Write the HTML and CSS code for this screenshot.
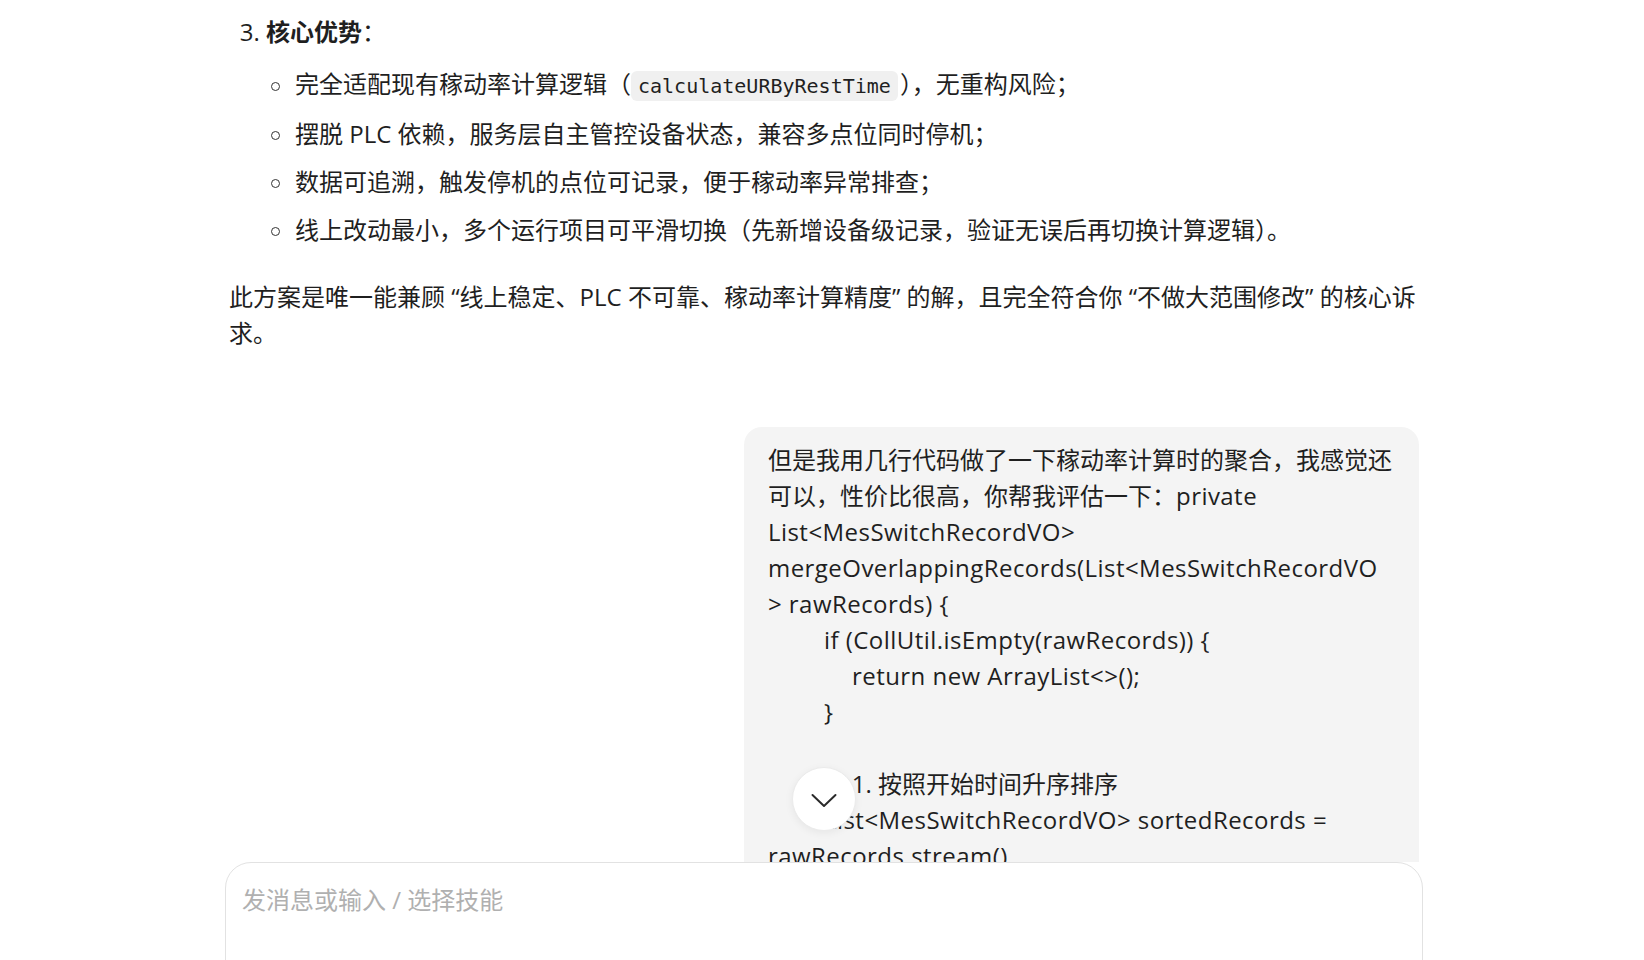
FILE: index.html
```html
<!DOCTYPE html>
<html lang="zh-CN">
<head>
<meta charset="utf-8">
<title>对话</title>
<link rel="stylesheet" href="styles.css">
</head>
<body>
<div class="app">
  <div class="scroll">
    <ol class="steps" start="3">
      <li><strong>核心优势</strong>：
        <ul class="bullets">
          <li><span>完全适配现有稼动率计算逻辑（<code>calculateURByRestTime</code>），无重构风险；</span></li>
          <li><span>摆脱 PLC 依赖，服务层自主管控设备状态，兼容多点位同时停机；</span></li>
          <li><span>数据可追溯，触发停机的点位可记录，便于稼动率异常排查；</span></li>
          <li><span>线上改动最小，多个运行项目可平滑切换（先新增设备级记录，验证无误后再切换计算逻辑）。</span></li>
        </ul>
      </li>
    </ol>
    <p class="summary">此方案是唯一能兼顾 “线上稳定、PLC 不可靠、稼动率计算精度” 的解，且完全符合你 “不做大范围修改” 的核心诉求。</p>
    <div class="user-row">
      <div class="bubble">
        <div class="ln">但是我用几行代码做了一下稼动率计算时的聚合，我感觉还</div>
        <div class="ln">可以，性价比很高，你帮我评估一下：<span class="lat">private</span></div>
        <div class="ln lat">List&lt;MesSwitchRecordVO&gt;</div>
        <div class="ln lat">mergeOverlappingRecords(List&lt;MesSwitchRecordVO</div>
        <div class="ln lat">&gt; rawRecords) {</div>
        <div class="ln lat in1">if (CollUtil.isEmpty(rawRecords)) {</div>
        <div class="ln lat in2">return new ArrayList&lt;&gt;();</div>
        <div class="ln lat in1">}</div>
        <div class="ln blank"></div>
        <div class="ln in1c">// 1. 按照开始时间升序排序</div>
        <div class="ln lat in1">List&lt;MesSwitchRecordVO&gt; sortedRecords =</div>
        <div class="ln lat">rawRecords.stream()</div>
      </div>
    </div>
    <button class="to-bottom" type="button" aria-label="回到底部">
      <svg width="26" height="15" viewBox="0 0 26 15" fill="none"><path d="M1.5 2 L13 13 L24.5 2" stroke="#2a2a2a" stroke-width="2" stroke-linecap="round" stroke-linejoin="round"/></svg>
    </button>
  </div>
  <div class="composer">
    <div class="placeholder">发消息或输入 / 选择技能</div>
  </div>
</div>
</body>
</html>
```

FILE: styles.css
```css
html, body {
  margin: 0;
  padding: 0;
  background: #ffffff;
}

body {
  font-family: "Open Sans", "Noto Sans CJK SC", sans-serif;
  font-size: 24px;
  line-height: 36px;
  color: #1f1f1f;
}

.app {
  height: 960px;
  overflow: hidden;
  display: flex;
  flex-direction: column;
  padding-left: 4px;
}

.scroll {
  flex: none;
  width: 1190px;
  height: 862px;
  margin: 0 auto;
  overflow: hidden;
  position: relative;
  padding-top: 14px;
  box-sizing: border-box;
}

.steps {
  margin: 0;
  padding-left: 37px;
}

.steps strong {
  font-weight: 700;
}

.bullets {
  list-style: none;
  margin: 16px 0 0 -2px;
  padding-left: 7px;
}

.bullets li {
  display: flex;
  align-items: center;
  margin-top: 12px;
  white-space: nowrap;
}

.bullets li:first-child {
  margin-top: 0;
}

.bullets li::before {
  content: "";
  flex: none;
  width: 9px;
  height: 9px;
  box-sizing: border-box;
  border: 1.5px solid #333333;
  border-radius: 50%;
  margin: 3px 15px 0 0;
}

code {
  font-family: "DejaVu Sans Mono", monospace;
  font-size: 20px;
  background: #f0f0f0;
  border-radius: 6px;
  padding: 3px 7px 3px 7px;
  margin: 0 2px 0 0;
  color: #1f1f1f;
}

.summary {
  margin: 31px 0 0;
}

.user-row {
  display: flex;
  justify-content: flex-end;
  margin-top: 76px;
}

.bubble {
  width: 675px;
  box-sizing: border-box;
  padding: 15px 24px 24px;
  background: #f4f4f4;
  border-radius: 18px;
}

.ln {
  white-space: nowrap;
  height: 36px;
}

.lat {
  letter-spacing: 0.45px;
}

.in1 { padding-left: 56px; }
.in2 { padding-left: 84px; }
.in1c { padding-left: 60px; }

.to-bottom {
  position: absolute;
  left: calc(50% - 32px);
  bottom: 31px;
  width: 64px;
  height: 64px;
  border-radius: 50%;
  border: 1px solid #ebebeb;
  background: #ffffff;
  box-shadow: 0 2px 8px rgba(0, 0, 0, 0.06);
  display: flex;
  align-items: center;
  justify-content: center;
  padding: 3px 0 0;
  cursor: pointer;
}

.composer {
  flex: none;
  width: 1198px;
  height: 160px;
  margin: 0 auto;
  box-sizing: border-box;
  border: 1px solid #e2e2e2;
  border-radius: 26px;
  background: #ffffff;
  padding: 19px 16px;
}

.placeholder {
  color: #b0b0b0;
}
```
